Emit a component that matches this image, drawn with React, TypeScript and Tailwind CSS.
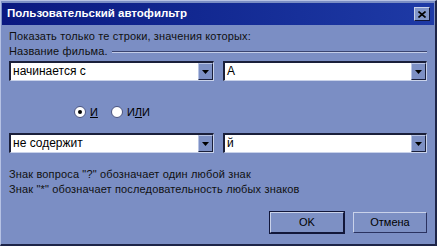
import React from 'react';

const font = { fontFamily: '"Liberation Sans", Arial, sans-serif' };

const Arrow = () => (
    <svg width="7" height="4" viewBox="0 0 7 4">
        <path d="M0 0 H7 L3.5 4 Z" fill="#000" />
    </svg>
);

const Combo: React.FC<{ value: string; width: string }> = ({ value, width }) => (
    <div className={`${width} h-[20px] flex border-t-2 border-l-2 border-t-[#1a1f3a] border-l-[#1a1f3a] border-b border-r border-b-[#c9d2ea] border-r-[#c9d2ea] bg-white`}>
        <div className="flex-1 pl-[2px] text-[12px] leading-[17px] text-black">{value}</div>
        <div className="w-[15px] h-full flex items-center justify-center bg-[#7d90c4] border border-t-[#b8c4e4] border-l-[#b8c4e4] border-b-[#1a1f3a] border-r-[#1a1f3a]">
            <Arrow />
        </div>
    </div>
);

const Radio: React.FC<{ checked?: boolean; label: string; underline: number }> = ({ checked, label, underline }) => (
    <div className="flex items-center gap-[4px]">
        <div className="w-[12px] h-[12px] rounded-full bg-white border border-[#4a5480] flex items-center justify-center">
            {checked && <div className="w-[4px] h-[4px] rounded-full bg-black" />}
        </div>
        <span className="text-[11px] text-black">
            {label.split('').map((c, i) => (
                <span key={i} className={i === underline ? 'underline' : ''}>{c}</span>
            ))}
        </span>
    </div>
);

const Button: React.FC<{ label: string; primary?: boolean }> = ({ label, primary }) => (
    <div className={`w-[74px] h-[21px] flex items-center justify-center text-[11px] text-black bg-[#7d90c4] border ${primary ? 'border-t-[#c9d2ea] border-l-[#c9d2ea] border-b-[#12173a] border-r-[#12173a] outline outline-1 outline-[#12173a]' : 'border-t-[#c9d2ea] border-l-[#c9d2ea] border-b-[#2a3260] border-r-[#2a3260]'}`}>
        {label}
    </div>
);

export default function App() {
    return (
        <div className="w-[437px] h-[246px] flex flex-col bg-[#7b8ec4] border-l border-t border-l-[#b6c2e4] border-t-[#b6c2e4] border-r-2 border-b-2 border-r-[#1d2448] border-b-[#1d2448]" style={font}>
            <div className="h-[22px] mx-[1px] mt-[2px] flex items-center justify-between pl-[5px] pr-[4px] bg-gradient-to-r from-[#0a1880] to-[#1e3aa6]">
                <span className="text-white font-bold text-[11.5px]">Пользовательский автофильтр</span>
                <div className="w-[16px] h-[14px] flex items-center justify-center bg-[#8296c8] border border-t-[#c9d2ea] border-l-[#c9d2ea] border-b-[#12173a] border-r-[#12173a]">
                    <svg width="8" height="7" viewBox="0 0 8 7">
                        <path d="M0.5 0.5 L7.5 6.5 M7.5 0.5 L0.5 6.5" stroke="#000" strokeWidth="1.6" />
                    </svg>
                </div>
            </div>
            <div className="flex-1 flex flex-col pl-[8px] pr-[8px] pt-[4px] text-[11px] text-[#101010] tracking-[0.15px]">
                <div className="leading-[15px]">Показать только те строки, значения которых:</div>
                <div className="flex items-center gap-[4px] leading-[15px]">
                    <span>Название фильма.</span>
                    <div className="flex-1 border-t border-t-[#3a4470] border-b border-b-[#c2cce8]" />
                </div>
                <div className="flex justify-between mt-[2px] tracking-normal">
                    <Combo value="начинается с" width="w-[205px]" />
                    <Combo value="А" width="w-[204px]" />
                </div>
                <div className="flex h-[14px] items-center gap-[13px] mt-[24px] pl-[65px] tracking-normal">
                    <Radio checked label="И" underline={0} />
                    <Radio label="ИЛИ" underline={1} />
                </div>
                <div className="flex justify-between mt-[14px] tracking-normal">
                    <Combo value="не содержит" width="w-[205px]" />
                    <Combo value="й" width="w-[204px]" />
                </div>
                <div className="mt-[14px] leading-[15px]">Знак вопроса "?" обозначает один любой знак</div>
                <div className="leading-[15px]">Знак "*" обозначает последовательность любых знаков</div>
                <div className="flex justify-end gap-[9px] mt-[15px] pr-[0px] tracking-normal">
                    <Button label="OK" primary />
                    <Button label="Отмена" />
                </div>
            </div>
        </div>
    );
}
